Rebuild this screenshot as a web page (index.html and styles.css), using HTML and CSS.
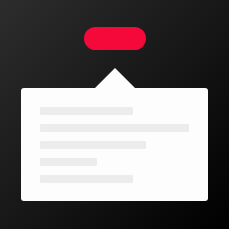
FILE: index.html
```html
<!DOCTYPE html>
<html>
<head>
<meta charset="utf-8">
<link rel="stylesheet" href="styles.css">
</head>
<body>
<div class="canvas">
  <div class="pill"></div>
  <div class="popover">
    <div class="arrow"></div>
    <div class="card">
      <div class="line w93"></div>
      <div class="line w149"></div>
      <div class="line w106"></div>
      <div class="line w57"></div>
      <div class="line w93"></div>
    </div>
  </div>
</div>
</body>
</html>
```
FILE: styles.css
```css
html, body { margin: 0; padding: 0; }
.canvas {
  width: 229px;
  height: 229px;
  background: linear-gradient(135deg, #2d2d2d 0%, #151515 55%, #000 100%);
  display: flex;
  flex-direction: column;
  align-items: center;
  padding-top: 27px;
  box-sizing: border-box;
}
.pill {
  width: 62px;
  height: 23px;
  border-radius: 12px;
  background: #f5083a;
  margin-left: 1px;
}
.popover {
  margin-top: 18px;
  display: flex;
  flex-direction: column;
  align-items: center;
}
.arrow {
  width: 0;
  height: 0;
  border-left: 20px solid transparent;
  border-right: 20px solid transparent;
  border-bottom: 20px solid #fdfdfd;
  margin-left: 1px;
}
.card {
  width: 187px;
  box-sizing: border-box;
  background: #fdfdfd;
  border-radius: 3px;
  padding: 19px 19px 18px;
  display: flex;
  flex-direction: column;
  gap: 9px;
}
.line { height: 8px; background: #ececec; border-radius: 1px; }
.w93 { width: 93px; }
.w149 { width: 149px; }
.w106 { width: 106px; }
.w57 { width: 57px; }
```
